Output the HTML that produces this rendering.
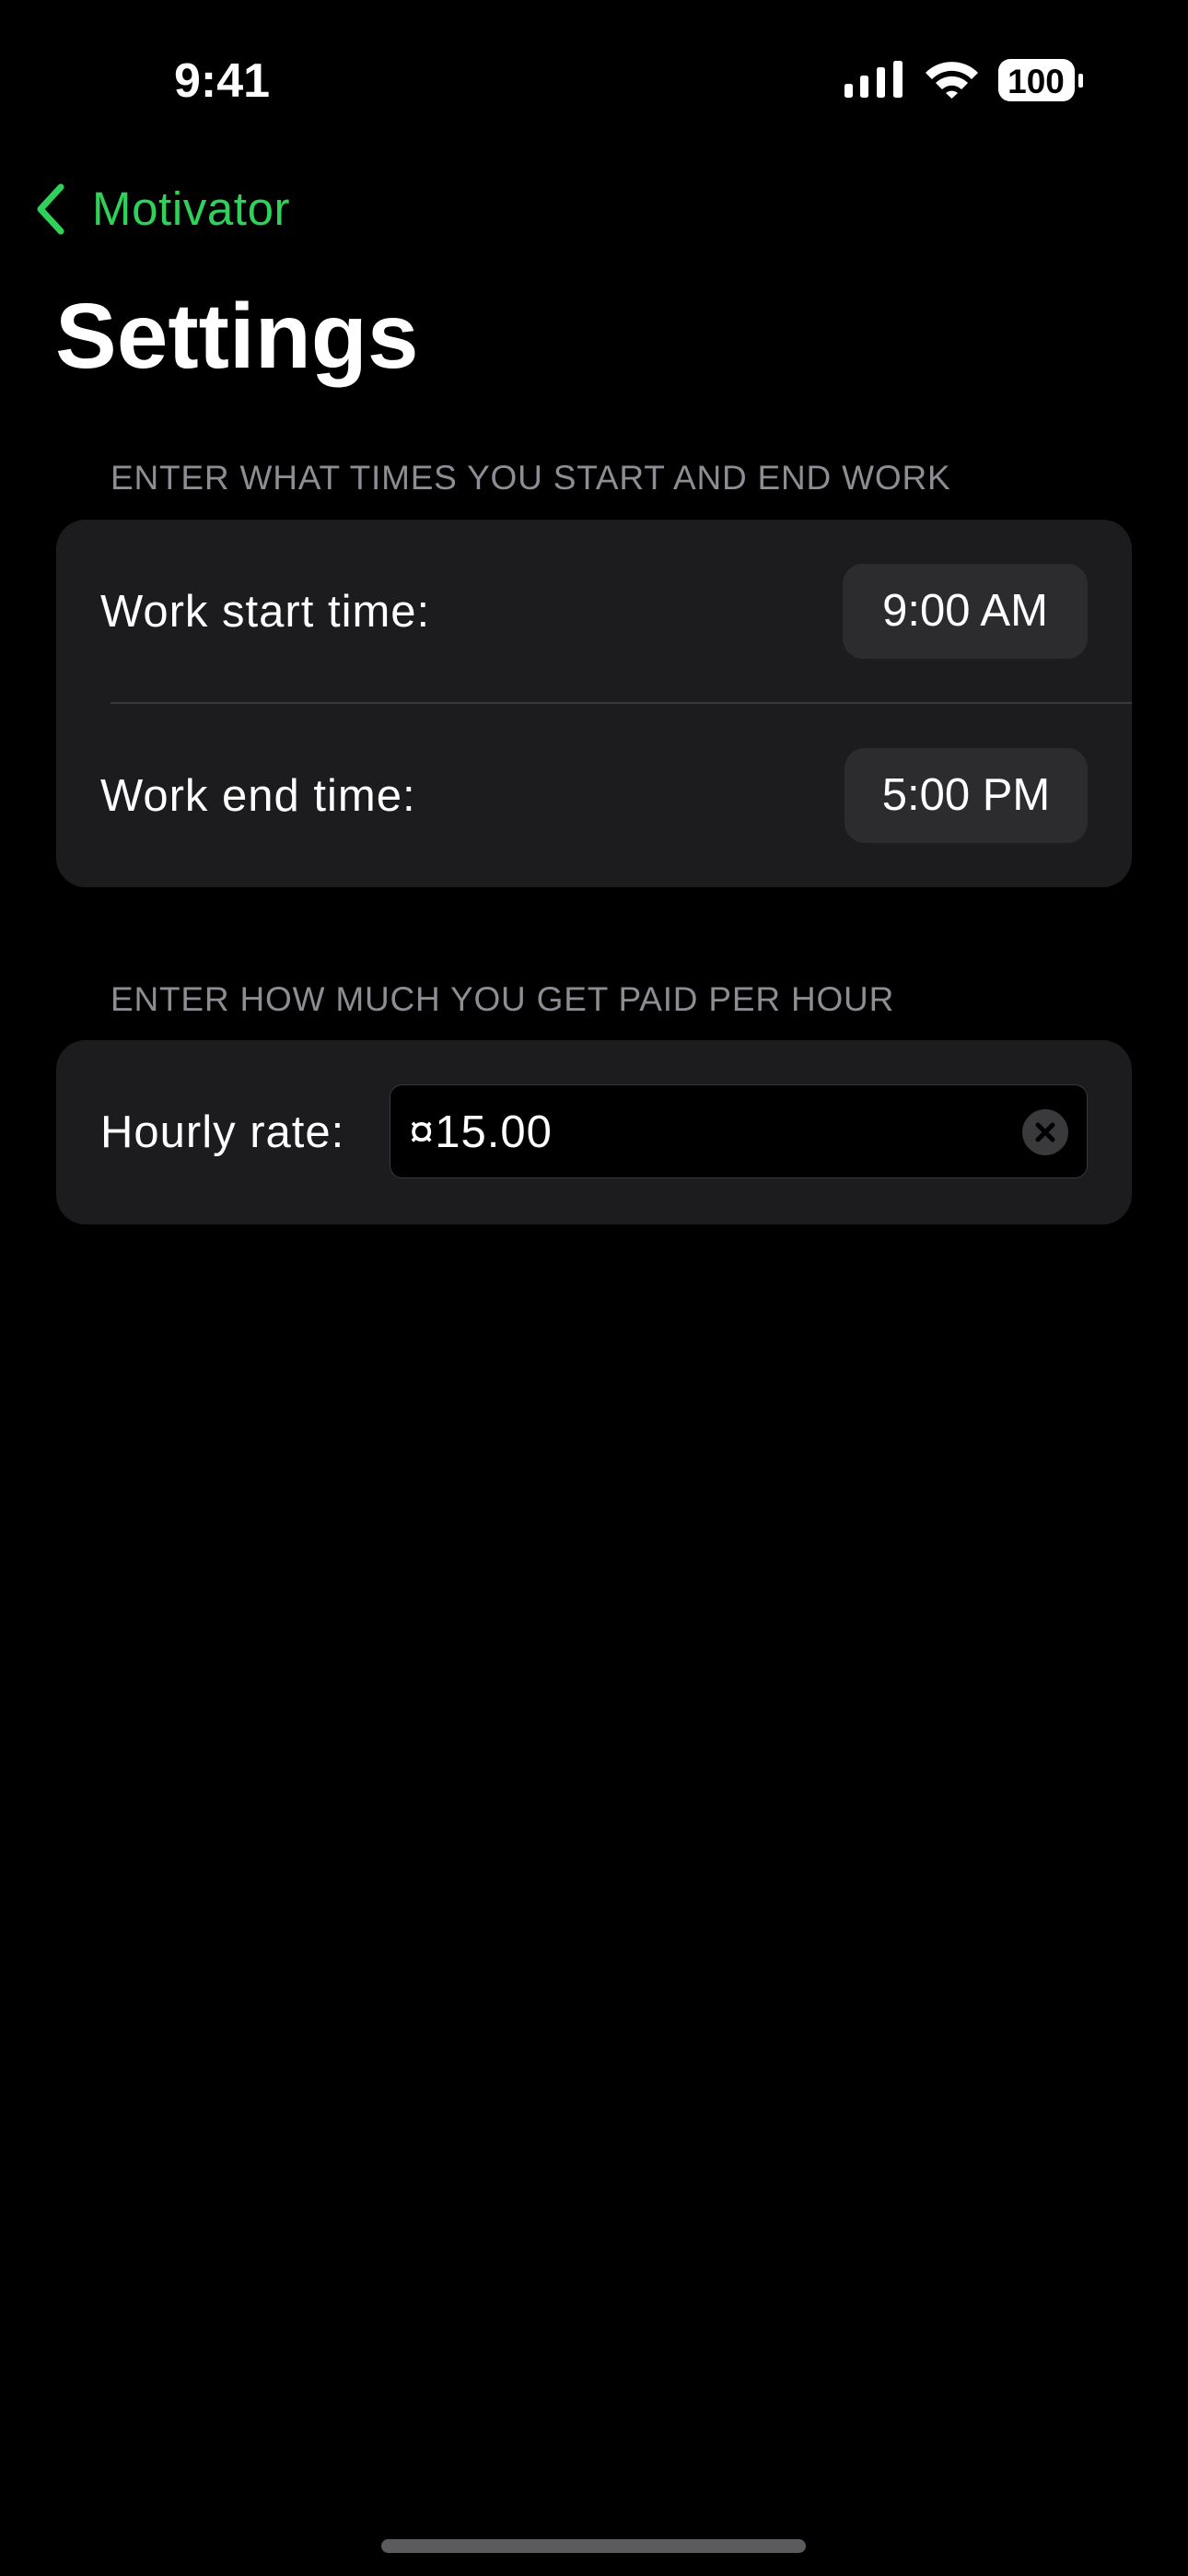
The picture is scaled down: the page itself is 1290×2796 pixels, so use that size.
<!DOCTYPE html>
<html><head><meta charset="utf-8"><style>
html,body{margin:0;padding:0;background:#000;}
body{width:1290px;height:2796px;position:relative;overflow:hidden;font-family:"Liberation Sans",sans-serif;color:#fff;}
.a{position:absolute;}
.card{position:absolute;left:61px;width:1168px;background:#1c1c1e;border-radius:32px;}
.lbl{position:absolute;font-size:49px;line-height:60px;color:#fff;letter-spacing:1px;}
.hdr{position:absolute;left:120px;font-size:37px;color:#8d8d93;line-height:44px;letter-spacing:0.8px;}
.btn{position:absolute;background:#2c2c2e;border-radius:22px;font-size:49px;line-height:103px;text-align:center;color:#fff;}
</style></head><body>
<div class="a" style="left:189px;top:58px;font-size:52px;font-weight:bold;line-height:60px;">9:41</div>
<svg class="a" style="left:910px;top:60px" width="270" height="55" viewBox="910 60 270 55">
<rect x="917" y="91" width="9" height="15" rx="2.5" fill="#fff"/>
<rect x="934" y="82" width="9" height="24" rx="2.5" fill="#fff"/>
<rect x="952" y="73" width="9" height="33" rx="2.5" fill="#fff"/>
<rect x="970" y="66" width="10" height="40" rx="2.5" fill="#fff"/>
<path d="M1005 79 A40 40 0 0 1 1062 79 L1055 86 A30 30 0 0 0 1012 86 Z" fill="#fff"/>
<path d="M1016 90 A25 25 0 0 1 1051 90 L1044 97 A15 15 0 0 0 1023 97 Z" fill="#fff"/>
<path d="M1027 101 A10 10 0 0 1 1040 101 L1033.5 107 Z" fill="#fff"/>
<rect x="1084" y="64" width="83" height="46" rx="13" fill="#fff"/>
<rect x="1171" y="80" width="5" height="15" rx="2" fill="#fff"/>
<text x="1125" y="101" font-family="Liberation Sans" font-weight="bold" font-size="37" text-anchor="middle" fill="#000">100</text>
</svg>
<svg class="a" style="left:36px;top:198px" width="40" height="58" viewBox="0 0 40 58"><path d="M30 5 L8 29 L30 53" stroke="#30d158" stroke-width="7" fill="none" stroke-linecap="round" stroke-linejoin="round"/></svg>
<div class="a" style="left:100px;top:197px;font-size:51px;line-height:60px;color:#30d158;letter-spacing:0.6px;">Motivator</div>
<div class="a" style="left:60px;top:310px;font-size:100px;font-weight:bold;line-height:110px;">Settings</div>
<div class="hdr" style="top:497px;">ENTER WHAT TIMES YOU START AND END WORK</div>
<div class="card" style="top:564px;height:399px;"></div>
<div class="lbl" style="left:109px;top:634px;">Work start time:</div>
<div class="btn" style="left:915px;top:612px;width:266px;height:103px;">9:00 AM</div>
<div class="a" style="left:120px;top:762px;width:1109px;height:2px;background:#3a3a3c;"></div>
<div class="lbl" style="left:109px;top:834px;">Work end time:</div>
<div class="btn" style="left:917px;top:812px;width:264px;height:103px;">5:00 PM</div>
<div class="hdr" style="top:1063px;">ENTER HOW MUCH YOU GET PAID PER HOUR</div>
<div class="card" style="top:1129px;height:200px;"></div>
<div class="lbl" style="left:109px;top:1199px;">Hourly rate:</div>
<div class="a" style="left:423px;top:1177px;width:756px;height:100px;background:#000;border:1px solid #38383a;border-radius:14px;"></div>
<div class="lbl" style="left:444px;top:1199px;">¤15.00</div>
<svg class="a" style="left:1110px;top:1204px" width="50" height="50" viewBox="0 0 50 50"><circle cx="25" cy="25" r="25" fill="#3a3a3c"/><path d="M17 17 L33 33 M33 17 L17 33" stroke="#000" stroke-width="5" stroke-linecap="round"/></svg>
<div class="a" style="left:414px;top:2756px;width:461px;height:15px;border-radius:8px;background:#5b5b5e;"></div>
</body></html>
